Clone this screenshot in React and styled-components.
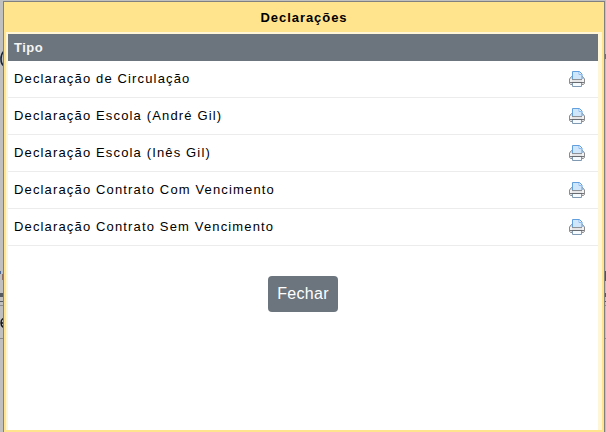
import React from "react";
import styled, { createGlobalStyle } from "styled-components";

const GlobalStyle = createGlobalStyle`
  * { box-sizing: border-box; }
  html, body { margin: 0; background: #c0c0c0; }
  body { overflow: hidden; font-family: "Liberation Sans", Arial, sans-serif; }
`;

const Page = styled.main`
  position: relative;
  width: 606px;
  height: 432px;
  padding: 1px 1px 0 3px;
  overflow: hidden;
  background: #c0c0c0;
`;

const Backdrop = styled.svg`
  position: absolute;
  inset: 0;
`;

const Dialog = styled.section`
  position: relative;
  display: flex;
  flex-direction: column;
  height: 431px;
  border: 1px solid #808080;
  border-bottom: 0;
  background: #ffe48d;
  padding: 0 2px 2px;
`;

const Title = styled.h1`
  margin: 0;
  height: 30px;
  text-align: center;
  font-size: 13px;
  line-height: 31px;
  letter-spacing: 0.95px;
  color: #000;
`;

const Content = styled.div`
  flex: 1;
  background: #fff;
  border: solid #fff6d8;
  border-width: 2px 4px 0 2px;
`;

const ListHeader = styled.div`
  height: 27px;
  padding-left: 6px;
  background: #6c757d;
  color: #f4f4f4;
  font-size: 13px;
  font-weight: bold;
  line-height: 27px;
  letter-spacing: 0.5px;
`;

const Row = styled.div`
  display: flex;
  align-items: center;
  justify-content: space-between;
  height: 37px;
  padding: 0 13px 0 6px;
  border-bottom: 1px solid #ececec;
  color: #000;
  font-size: 13px;
  line-height: 18px;
  letter-spacing: 1.15px;
`;

const PrintButton = styled.button`
  display: flex;
  padding: 0;
  border: 0;
  background: none;
`;

const Footer = styled.footer`
  display: flex;
  justify-content: center;
  padding-top: 30px;
`;

const CloseButton = styled.button`
  width: 70px;
  height: 36px;
  padding: 0;
  border: 0;
  border-radius: 4px;
  background: #6c757d;
  color: #fff;
  font: 16px/36px "Liberation Sans", Arial, sans-serif;
  letter-spacing: 0.3px;
`;

function Printer() {
  return (
    <svg width="16" height="16" viewBox="0 0 16 16">
      <path d="M2.5 5.5h11l2 2.5v4.5l-1 1h-13l-1-1V8z" fill="#dcdcde" stroke="#8c8c8e" />
      <path d="M1 8h2v3H1zM13 8h2v3h-2z" fill="#f3f3f3" />
      <path d="M3.5 8V.5h7l2.5 2.5v5" fill="#cfe6fb" stroke="#629fde" />
      <path d="M10 1v2.5h2.5" fill="#fff" stroke="#8bbcf0" />
      <path d="M3 8h10v3H3z" fill="#e5e5e7" />
      <path d="M3 8.5h10" stroke="#8d9299" />
      <path d="M1 11.5h14" stroke="#77787b" />
      <path d="M3.5 11.5v4h9v-4" fill="#f5faff" stroke="#8099b3" />
      <path d="M3 11.5h10" stroke="#686b70" />
    </svg>
  );
}

const declarations = [
  "Declaração de Circulação",
  "Declaração Escola (André Gil)",
  "Declaração Escola (Inês Gil)",
  "Declaração Contrato Com Vencimento",
  "Declaração Contrato Sem Vencimento",
];

export default function App() {
  return (
    <>
      <GlobalStyle />
      <Page>
        <Backdrop width="606" height="432" aria-hidden="true">
          <path d="M4 51Q1 54 1 59t3 7" fill="none" stroke="#152238" strokeWidth="1.6" />
          <path d="M0 272.5h1" stroke="#4d6692" strokeWidth="3" />
          <path d="M2.5 274v6" stroke="#8d7069" />
          <path d="M0 295h3M605 295h1" stroke="#555b61" strokeWidth="4" />
          <path d="M0 301.5h3M605 301.5h1" stroke="#555b61" />
          <path d="M0 305.5h3M605 305.5h1M0 338.5h3M605 338.5h1" stroke="#8c8c8c" />
          <path d="M4 319H2.5Q1 320 1 323t2 4H4M1 323h3" fill="none" stroke="#111" strokeWidth="1.4" />
          <path d="M605.5 54v5" stroke="#397da8" />
          <path d="M605.5 271v10" stroke="#76434a" />
        </Backdrop>
        <Dialog>
          <Title>Declarações</Title>
          <Content>
            <ListHeader>Tipo</ListHeader>
            {declarations.map((name) => (
              <Row key={name}>
                <span>{name}</span>
                <PrintButton aria-label="Imprimir"><Printer /></PrintButton>
              </Row>
            ))}
            <Footer><CloseButton>Fechar</CloseButton></Footer>
          </Content>
        </Dialog>
      </Page>
    </>
  );
}
